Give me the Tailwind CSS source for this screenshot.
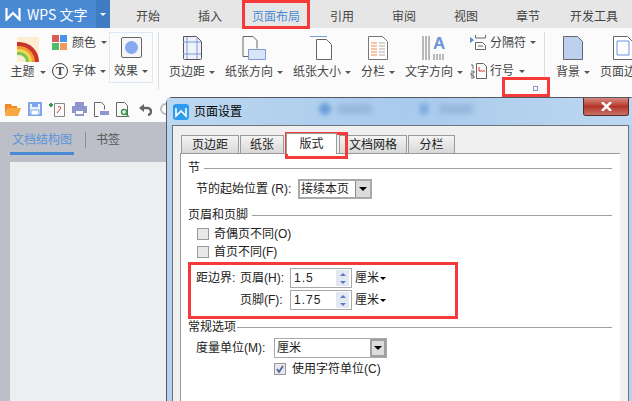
<!DOCTYPE html>
<html lang="zh-CN">
<head>
  <meta charset="UTF-8" />
  <title>WPS 文字 - 页面设置</title>
  <script src="https://cdn.jsdelivr.net/npm/@tailwindcss/browser@4"></script>
</head>
<body class="relative w-[632px] h-[401px] overflow-hidden bg-[#bcbfc8] text-[12px] leading-[16px] text-[#333] font-['Liberation_Sans','Noto_Sans_CJK_SC',sans-serif]">

  <!-- 标签栏 -->
  <header class="flex h-[28px] bg-[#e6e6e6] text-[#444]">
    <div class="flex w-[110px] bg-[#4a8ad4] text-white">
      <div class="flex flex-1 items-center pl-[5px] gap-[6px] text-[14px]">
        <svg class="w-[16px] h-[14px]" viewBox="0 0 16 14" fill="none" stroke="#fff" stroke-width="2.2"><path d="M1.5 1v11.5L8 6l6.500 6.500V1" /></svg>
        <span class="font-['Noto_Sans_CJK_SC',sans-serif]">WPS 文字</span>
      </div>
      <div class="flex w-[14px] items-center justify-center bg-[#3f7cc4]"><span class="border-x-[3px] border-t-[3px] border-x-transparent border-t-white"></span></div>
    </div>
    <nav class="flex pt-[9px] text-[12px]">
      <span class="ml-[26px]">开始</span>
      <span class="ml-[38px]">插入</span>
      <span class="ml-[30px] text-[#4a8ad4]">页面布局</span>
      <span class="ml-[30px]">引用</span>
      <span class="ml-[38px]">审阅</span>
      <span class="ml-[38px]">视图</span>
      <span class="ml-[38px]">章节</span>
      <span class="ml-[30px]">开发工具</span>
    </nav>
  </header>

  <!-- 功能区 -->
  <section class="flex h-[68px] bg-[#fbfbfb] text-[#444] whitespace-nowrap *:shrink-0">
    <div class="flex w-[50px] flex-col items-center pl-[6px] pt-[9px]">
      <svg class="w-[22px] h-[25px]" viewBox="0 0 22 25"><rect width="22" height="25" fill="#fdeed2"/><circle cx="2" cy="25" r="20" fill="#c9332b"/><circle cx="2" cy="25" r="16" fill="#ee9a35"/><circle cx="2" cy="25" r="13" fill="#f0d84d"/><circle cx="2" cy="25" r="10" fill="#7cc35a"/><circle cx="2" cy="25" r="7" fill="#fdeed2"/></svg>
      <div class="mt-[2px] flex items-center h-[16px]">主题<i class="ml-[5px] border-x-[3px] border-t-[3px] border-x-transparent border-t-[#555]"></i></div>
    </div>
    <div class="flex w-[59px] flex-col pl-[2px] pt-[7px] gap-[13px]">
      <div class="flex items-center h-[15px] gap-[5px]">
        <div class="grid grid-cols-2 gap-[1px] w-[15px] h-[15px]"><b class="bg-[#dc5b58]"></b><b class="bg-[#4a94e8]"></b><b class="bg-[#4fba6c]"></b><b class="bg-[#f09a5e]"></b></div>
        颜色<i class="border-x-[3px] border-t-[3px] border-x-transparent border-t-[#555]"></i>
      </div>
      <div class="flex items-center h-[16px] gap-[4px]">
        <div class="flex w-[16px] h-[16px] items-center justify-center rounded-full border border-[#444] font-['Liberation_Serif',serif] text-[12px] font-bold">T</div>
        字体<i class="border-x-[3px] border-t-[3px] border-x-transparent border-t-[#555]"></i>
      </div>
    </div>
    <div class="flex mt-[4px] w-[44px] h-[51px] flex-col items-center border border-[#dce8f5] pt-[4px]">
      <div class="flex w-[21px] h-[21px] items-center justify-center rounded-[2px] border border-[#666] bg-[#f5f5f5]"><span class="w-[13px] h-[13px] rounded-full bg-[#85a8ee]"></span></div>
      <div class="mt-[5px] flex items-center h-[16px]">效果<i class="ml-[4px] border-x-[3px] border-t-[3px] border-x-transparent border-t-[#555]"></i></div>
    </div>
    <div class="ml-[5px] mt-[4px] w-[1px] h-[58px] bg-[#dedede]"></div>

    <div class="ml-[5px] flex w-[56px] flex-col items-center pt-[8px]">
      <svg class="w-[20px] h-[24px]" viewBox="0 0 20 24" fill="#eef1f8" stroke="#555"><path d="M1.500.5h13l5 5v17a1 1 0 0 1-1 1h-16a1 1 0 0 1-1-1z"/><path d="M5 1v22M15 1v22M1 6h18M1 18h18" stroke="#7d9bd8" fill="none"/></svg>
      <div class="mt-[4px] flex items-center h-[16px]">页边距<i class="ml-[4px] border-x-[3px] border-t-[3px] border-x-transparent border-t-[#555]"></i></div>
    </div>
    <div class="ml-[3px] flex w-[62px] flex-col items-center pt-[8px]">
      <svg class="w-[24px] h-[24px]" viewBox="0 0 24 24" fill="none" stroke="#666"><path d="M1 .5h10l4 4v8M1 .5v20h5"/><path d="M6.500 13.500h17v10h-17z" fill="#d8e4f8" stroke="#7d9bd8"/></svg>
      <div class="mt-[4px] flex items-center h-[16px]">纸张方向<i class="ml-[4px] border-x-[3px] border-t-[3px] border-x-transparent border-t-[#555]"></i></div>
    </div>
    <div class="ml-[6px] flex w-[62px] flex-col items-center pt-[8px]">
      <svg class="w-[24px] h-[24px]" viewBox="0 0 24 24" fill="#fff" stroke="#666"><path d="M0 .5h17" stroke="#7d9bd8"/><path d="M6.500 3.500h10l5 5v15h-15z"/></svg>
      <div class="mt-[4px] flex items-center h-[16px]">纸张大小<i class="ml-[4px] border-x-[3px] border-t-[3px] border-x-transparent border-t-[#555]"></i></div>
    </div>
    <div class="ml-[6px] flex w-[38px] flex-col items-center pt-[8px]">
      <svg class="w-[20px] h-[24px]" viewBox="0 0 20 24" fill="#fff" stroke="#777"><path d="M.5.5h14l5 5v18H.5z"/><path d="M3 7h6M3 10h6M3 13h6M3 16h6M3 19h6" stroke="#ee8a4d"/><path d="M11 7h6M11 10h6M11 13h6M11 16h6M11 19h6" stroke="#aaa"/></svg>
      <div class="mt-[4px] flex items-center h-[16px]">分栏<i class="ml-[4px] border-x-[3px] border-t-[3px] border-x-transparent border-t-[#555]"></i></div>
    </div>
    <div class="ml-[6px] flex w-[62px] flex-col items-center pt-[8px]">
      <div class="flex h-[24px] items-start gap-[1px]">
        <svg class="w-[10px] h-[24px]" viewBox="0 0 10 24" stroke="#777"><path d="M1 0v24M4 0v24M7 0v24"/></svg>
        <div class="flex h-[24px] flex-col"><span class="font-['Liberation_Sans',sans-serif] font-bold text-[17px] leading-[15px] text-[#6b93dd]">A</span><svg class="w-[13px] h-[6px] mt-[3px]" viewBox="0 0 13 6" stroke="#777"><path d="M1 0v6M4 0v6M7 0v6M10 0v6"/></svg></div>
      </div>
      <div class="mt-[4px] flex items-center h-[16px]">文字方向<i class="ml-[4px] border-x-[3px] border-t-[3px] border-x-transparent border-t-[#555]"></i></div>
    </div>
    <div class="ml-[5px] flex w-[74px] flex-col pt-[7px] gap-[13px]">
      <div class="flex items-center h-[15px] gap-[3px]">
        <svg class="w-[17px] h-[15px]" viewBox="0 0 17 15" fill="none" stroke="#666"><path d="M0 2l4 3-4 3z" fill="#5b86d8" stroke="none"/><path d="M5.500 0v3h10V0M5.500 14.500v-7h7l3 3v4zM8 11h5"/></svg>
        分隔符<i class="ml-[1px] border-x-[3px] border-t-[3px] border-x-transparent border-t-[#555]"></i>
      </div>
      <div class="flex items-center h-[16px] gap-[3px]">
        <svg class="w-[17px] h-[16px]" viewBox="0 0 17 16" fill="none"><path d="M1 2h2v4M1 8h3v2H1v2h3M1 13h3v2H1" stroke="#666"/><path d="M6.500.5h7l3 3v12h-10z" stroke="#666"/><path d="M9 4v4h6" stroke="#d33"/></svg>
        行号<i class="ml-[2px] border-x-[3px] border-t-[3px] border-x-transparent border-t-[#555]"></i>
      </div>
    </div>
    <div class="mt-[4px] w-[1px] h-[58px] bg-[#dedede]"></div>
    <div class="ml-[6px] flex w-[44px] flex-col items-center pt-[8px]">
      <svg class="w-[20px] h-[24px]" viewBox="0 0 20 24" fill="#bdd0f0" stroke="#666"><path d="M.5.500h14l5 5v18H.5z"/></svg>
      <div class="mt-[4px] flex items-center h-[16px]">背景<i class="ml-[4px] border-x-[3px] border-t-[3px] border-x-transparent border-t-[#555]"></i></div>
    </div>
    <div class="flex flex-col pl-[5px] pt-[8px]">
      <svg class="ml-[13px] w-[20px] h-[24px]" viewBox="0 0 20 24" fill="#fff" stroke="#666"><path d="M.5.500h14l5 5v18H.5z"/><path d="M4 5h12v14H4z" stroke="#6b93dd" fill="none"/></svg>
      <div class="mt-[4px] h-[16px]">页面边</div>
    </div>
  </section>

  <!-- 快速访问工具栏 -->
  <section class="flex h-[26px] items-center bg-[#fbfbfb] pl-[5px] gap-[7px]">
    <svg class="w-[16px] h-[14px]" viewBox="0 0 16 14"><path d="M0 2h6l1 2h5v2H3L0 13z" fill="#f08a24"/><path d="M3 6h13l-3 8H0z" fill="#f7a640"/></svg>
    <svg class="w-[14px] h-[14px]" viewBox="0 0 14 14" fill="none"><rect x="1" y="1" width="12" height="12" fill="#eaf1fc" stroke="#7ea6ea" stroke-width="2"/><path d="M4 1h6v4H4z" fill="#7ea6ea"/><path d="M3 8h8v5H3z" fill="#fff" stroke="#7ea6ea"/></svg>
    <svg class="w-[16px] h-[15px]" viewBox="0 0 16 15" fill="none"><path d="M5.500 1.500h10v13h-10z" stroke="#888"/><path d="M8 11l4-5a2 2 0 0 0-3-1" stroke="#d33"/><path d="M0 3h4M2 1v4" stroke="#3a9a4a" stroke-width="2"/></svg>
    <svg class="w-[15px] h-[14px]" viewBox="0 0 15 14"><path d="M3 0h9v4H3zM0 4h15v7h-3v3H3v-3H0z" fill="#8f95cf"/><path d="M4 9h7v3H4z" fill="#fff"/></svg>
    <svg class="w-[15px] h-[15px]" viewBox="0 0 15 15" fill="none"><path d="M.500.500h7l3 3v4M.500.500v14h4" stroke="#666"/><path d="M6 9h9v4H6z" fill="#8f95cf"/></svg>
    <svg class="w-[14px] h-[15px]" viewBox="0 0 14 15" fill="none"><path d="M.500.500h8l3 3v11h-11z" stroke="#666"/><circle cx="8" cy="10" r="2.500" stroke="#3a9a4a" stroke-width="1.500"/><path d="M10 12l3 3" stroke="#3a9a4a" stroke-width="1.500"/></svg>
    <svg class="ml-[2px] w-[13px] h-[13px]" viewBox="0 0 13 13" fill="none" stroke="#666" stroke-width="2.500"><path d="M3 5h5a3.500 3.500 0 0 1 1 7"/><path d="M0 5l5-4v8z" fill="#666" stroke="none"/></svg>
    <svg class="w-[13px] h-[15px]" viewBox="0 0 13 15" fill="none" stroke="#bbb" stroke-width="2"><circle cx="7" cy="7" r="5"/></svg>
  </section>

  <!-- 文档结构图 -->
  <aside class="w-[166px]">
    <div class="flex h-[40px] pl-[10px] pt-[9px]">
      <div class="h-[24px] w-[64px] border-b-[3px] border-[#4a8ad4] pl-[2px] pt-[1px] text-[#5b94d8]">文档结构图</div>
      <div class="ml-[11px] mt-[1px] h-[16px] w-[1px] bg-[#8c8f98]"></div>
      <div class="ml-[10px] pt-[1px] text-[#555]">书签</div>
    </div>
    <div class="ml-[10px] h-[240px] bg-[#edeef0]"></div>
  </aside>

  <!-- 页面设置对话框 -->
  <div class="absolute left-[166px] top-[97px] w-[470px] h-[310px] rounded-t-[6px] border border-[#55585e] bg-[#b5d2ee]">
    <div class="relative flex h-[27px] items-center pl-[6px] gap-[5px] text-black bg-gradient-to-r from-[#bcd7f1] via-[#a9cbec] to-[#bcd7f1]">
      <svg class="w-[16px] h-[16px]" viewBox="0 0 16 16"><rect width="16" height="16" rx="3" fill="#2e9bef"/><path d="M3 4v8l5-5 5 5V4" fill="none" stroke="#fff" stroke-width="1.600"/></svg>
      <span>页面设置</span>
      <span class="absolute left-[152px] top-[5px] h-[12px] w-[12px] rounded-full bg-[#6d9fdb] blur-[2px]"></span>
      <span class="absolute left-[171px] top-[7px] h-[8px] w-[34px] bg-[#8fb3d8] blur-[3px]"></span>
      <span class="absolute left-[252px] top-[5px] h-[12px] w-[10px] rounded-full bg-[#80aee0] blur-[2px]"></span>
      <span class="absolute left-[272px] top-[7px] h-[8px] w-[34px] bg-[#8fb3d8] blur-[3px]"></span>
    </div>
    <div class="absolute right-[6px] top-[0px] flex h-[18px] w-[46px] items-center justify-center rounded-b-[3px] border border-[#5a2a28] border-t-0 bg-gradient-to-b from-[#d8877f] via-[#b3352a] to-[#c9706a]">
      <svg class="w-[11px] h-[9px]" viewBox="0 0 11 9" stroke="#fff" stroke-width="2.500"><path d="M1 0l9 9M10 0L1 9"/></svg>
    </div>
    <div class="ml-[5px] mr-[6px] h-[280px] border border-[#6d7178] bg-[#f0f0f0] pl-[7px] pr-[8px]">
      <div class="flex h-[27px] items-end gap-[1px] pl-[1px] text-[#222]">
        <div class="flex h-[18px] w-[58px] items-center justify-center border border-b-0 border-[#9a9a9a] bg-gradient-to-b from-[#f4f4f4] to-[#d8d8d8]">页边距</div>
        <div class="flex h-[18px] w-[44px] items-center justify-center border border-b-0 border-[#9a9a9a] bg-gradient-to-b from-[#f4f4f4] to-[#d8d8d8]">纸张</div>
        <div class="relative z-10 ml-[1px] -mb-[1px] flex h-[21px] w-[51px] items-center justify-center border border-b-0 border-[#9a9a9a] bg-white">版式</div>
        <div class="ml-[1px] flex h-[18px] w-[68px] items-center justify-center border border-b-0 border-[#9a9a9a] bg-gradient-to-b from-[#f4f4f4] to-[#d8d8d8]">文档网格</div>
        <div class="flex h-[18px] w-[47px] items-center justify-center border border-b-0 border-[#9a9a9a] bg-gradient-to-b from-[#f4f4f4] to-[#d8d8d8]">分栏</div>
      </div>
      <div class="h-[260px] border-l border-t border-[#9a9a9a] bg-white pl-[7px] pr-[8px] pt-[6px] text-[#222]">
        <div class="flex h-[16px] items-center gap-[4px]">节<span class="h-[1px] flex-1 bg-[#a0a0a0]"></span></div>
        <div class="mt-[3px] flex h-[20px] items-center pl-[8px]">
          <span class="w-[102px]">节的起始位置 (R):</span>
          <div class="flex h-[20px] w-[74px] items-center justify-between border-2 border-[#a9a9a9] pl-[1px]">接续本页<span class="flex h-full w-[15px] items-center justify-center border-l border-[#888] bg-[#dcdcdc]"><i class="border-x-[4px] border-t-[4px] border-x-transparent border-t-black"></i></span></div>
        </div>
        <div class="mt-[8px] flex h-[16px] items-center gap-[4px]">页眉和页脚<span class="h-[1px] flex-1 bg-[#a0a0a0]"></span></div>
        <div class="mt-[3px] flex h-[16px] items-center gap-[5px] pl-[9px]"><span class="h-[12px] w-[12px] border border-[#999] bg-[#e8e8e8]"></span>奇偶页不同(O)</div>
        <div class="mt-[2px] flex h-[16px] items-center gap-[5px] pl-[9px]"><span class="h-[12px] w-[12px] border border-[#999] bg-[#e8e8e8]"></span>首页不同(F)</div>
        <div class="mt-[8px] flex h-[20px] items-center pl-[8px]">
          <span class="w-[44px]">距边界:</span><span class="w-[50px]">页眉(H):</span>
          <div class="flex h-[20px] w-[62px] items-center justify-between border border-[#a9a9a9] pl-[3px] tracking-[1px]">1.5<span class="mr-[2px] flex h-[16px] w-[13px] flex-col items-center justify-around bg-[#e4e8f2]"><i class="border-x-[3px] border-b-[3px] border-x-transparent border-b-[#5a78c8]"></i><i class="border-x-[3px] border-t-[3px] border-x-transparent border-t-[#5a78c8]"></i></span></div>
          <span class="ml-[3px]">厘米</span><i class="ml-[1px] border-x-[3px] border-t-[3px] border-x-transparent border-t-black"></i>
        </div>
        <div class="mt-[2px] flex h-[20px] items-center pl-[52px]">
          <span class="w-[50px]">页脚(F):</span>
          <div class="flex h-[20px] w-[62px] items-center justify-between border border-[#a9a9a9] pl-[3px] tracking-[1px]">1.75<span class="mr-[2px] flex h-[16px] w-[13px] flex-col items-center justify-around bg-[#e4e8f2]"><i class="border-x-[3px] border-b-[3px] border-x-transparent border-b-[#5a78c8]"></i><i class="border-x-[3px] border-t-[3px] border-x-transparent border-t-[#5a78c8]"></i></span></div>
          <span class="ml-[3px]">厘米</span><i class="ml-[1px] border-x-[3px] border-t-[3px] border-x-transparent border-t-black"></i>
        </div>
        <div class="mt-[9px] flex h-[16px] items-center gap-[1px]">常规选项<span class="h-[1px] flex-1 bg-[#a0a0a0]"></span></div>
        <div class="mt-[3px] flex h-[20px] items-center pl-[8px]">
          <span class="w-[78px]">度量单位(M):</span>
          <div class="flex h-[20px] w-[113px] items-center justify-between border border-[#a9a9a9] pl-[2px]">厘米<span class="flex h-full w-[16px] items-center justify-center border-2 border-[#a0a0a0] bg-[#dcdcdc]"><i class="border-x-[4px] border-t-[4px] border-x-transparent border-t-black"></i></span></div>
        </div>
        <div class="mt-[3px] flex h-[16px] items-center gap-[6px] pl-[86px]">
          <svg class="h-[12px] w-[12px]" viewBox="0 0 12 12"><rect x=".5" y=".5" width="11" height="11" fill="#e8e8e8" stroke="#999"/><path d="M3 6l2 3 4-6" fill="none" stroke="#4c63a8" stroke-width="1.800"/></svg>
          使用字符单位(C)
        </div>
      </div>
    </div>
  </div>

  <!-- 标注红框 -->
  <div class="absolute left-[242px] top-0 h-[29px] w-[68px] border-[3px] border-[#f63a3a]"></div>
  <div class="absolute left-[502px] top-[77px] h-[20px] w-[48px] border-[3px] border-[#f63a3a] bg-[#fbfbfb]"><span class="absolute left-[28px] top-[6px] h-[5px] w-[5px] border border-[#8a9ab8]"></span></div>
  <div class="absolute left-[285px] top-[132px] h-[27px] w-[63px] border-[3px] border-[#f63a3a]"></div>
  <div class="absolute left-[188px] top-[262px] h-[57px] w-[270px] border-[3px] border-[#f63a3a]"></div>
</body>
</html>
